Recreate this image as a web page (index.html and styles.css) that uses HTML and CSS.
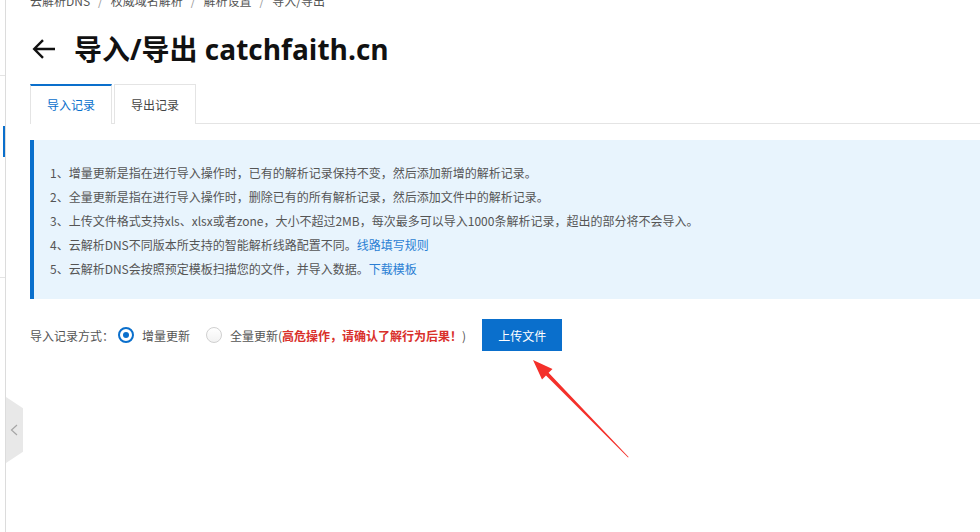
FILE: index.html
```html
<!DOCTYPE html>
<html lang="zh-CN">
<head>
<meta charset="utf-8">
<title>导入/导出 catchfaith.cn</title>
<link rel="stylesheet" href="styles.css">
</head>
<body>
<div class="shell">
  <aside class="side">
    <div class="side-top"></div>
    <div class="side-active"></div>
    <div class="side-sep"></div>
    <div class="collapse">
      <svg width="17" height="66" viewBox="0 0 17 66"><polyline points="11,28 5.5,33 11,38" fill="none" stroke="#a6a6a6" stroke-width="1.2"/></svg>
    </div>
  </aside>
  <main class="main">
    <nav class="crumb">
      <span>云解析DNS</span><span class="sep">/</span><span>权威域名解析</span><span class="sep">/</span><span>解析设置</span><span class="sep">/</span><span>导入/导出</span>
    </nav>
    <div class="head">
      <svg class="back" width="24" height="24" viewBox="0 0 24 24"><path d="M23 12H2.5M11 3.2L2.2 12 11 20.8" fill="none" stroke="#111" stroke-width="2.4"/></svg>
      <h1>导入/导出 catchfaith.cn</h1>
    </div>
    <div class="tabs">
      <div class="tab active">导入记录</div>
      <div class="tab">导出记录</div>
    </div>
    <div class="notice">
      <p>1、增量更新是指在进行导入操作时，已有的解析记录保持不变，然后添加新增的解析记录。</p>
      <p>2、全量更新是指在进行导入操作时，删除已有的所有解析记录，然后添加文件中的解析记录。</p>
      <p>3、上传文件格式支持xls、xlsx或者zone，大小不超过2MB，每次最多可以导入1000条解析记录，超出的部分将不会导入。</p>
      <p>4、云解析DNS不同版本所支持的智能解析线路配置不同。<a class="link">线路填写规则</a></p>
      <p>5、云解析DNS会按照预定模板扫描您的文件，并导入数据。<a class="link">下载模板</a></p>
    </div>
    <div class="form-row">
      <span class="label">导入记录方式：</span>
      <span class="radio checked"></span>
      <span class="opt">增量更新</span>
      <span class="radio"></span>
      <span class="opt">全量更新(<b class="warn">高危操作，请确认了解行为后果！</b>)</span>
      <button class="btn">上传文件</button>
    </div>
  </main>
  <svg class="annot" width="980" height="532" viewBox="0 0 980 532">
    <polygon points="533,360 552.5,369 548.6,372.8 628.6,457 628,457.4 546,375.4 542,379.5" fill="#f4302a"/>
  </svg>
</div>
</body>
</html>
```

FILE: styles.css
```css
html, body {
  margin: 0;
  padding: 0;
  background: #fff;
}
body {
  font-family: "Noto Sans CJK SC", sans-serif;
  font-size: 12px;
  color: #555;
  overflow: hidden;
}
.shell {
  position: relative;
  display: flex;
  width: 980px;
  height: 532px;
  overflow: hidden;
}
.side {
  position: relative;
  width: 5px;
  flex: none;
  border-right: 1px solid #dcdcdc;
}
.side-top {
  height: 75px;
  border-bottom: 1px solid #e4e4e4;
}
.side-active {
  margin-top: 50px;
  margin-left: 3px;
  width: 2px;
  height: 31px;
  background: #0a6fcc;
}
.side-sep {
  margin-top: 120px;
  border-top: 1px solid #e4e4e4;
}
.collapse {
  position: absolute;
  left: 6px;
  top: 397px;
  width: 17px;
  height: 66px;
  background: #e8e8e8;
  clip-path: polygon(0 0, 100% 17%, 100% 83%, 0 100%);
}
.collapse svg {
  display: block;
}
.main {
  flex: 1;
  min-width: 0;
  padding-left: 24px;
}
.crumb {
  margin-top: -9px;
  line-height: 20px;
  height: 20px;
  color: #555;
  white-space: nowrap;
}
.crumb .sep {
  padding: 0 8px;
  color: #999;
}
.head {
  display: flex;
  align-items: center;
  margin-top: 20px;
  height: 36px;
}
.back {
  flex: none;
  margin-left: 2px;
  margin-right: 18px;
}
.head h1 {
  margin: 0;
  font-family: "Open Sans", "Noto Sans CJK SC", sans-serif;
  font-size: 28px;
  font-weight: 700;
  line-height: 36px;
  color: #111;
  white-space: nowrap;
}
.tabs {
  display: flex;
  gap: 2px;
  margin-top: 17px;
  border-bottom: 1px solid #e4e4e4;
}
.tab {
  box-sizing: border-box;
  width: 82px;
  height: 40px;
  margin-bottom: -1px;
  border: 1px solid #e4e4e4;
  border-bottom: none;
  text-align: center;
  line-height: 39px;
  color: #444;
  background: #fff;
}
.tab.active {
  border-top: 2px solid #0a6fcc;
  line-height: 37px;
  color: #0a6fcc;
}
.notice {
  margin-top: 16px;
  padding: 21px 16px 18px;
  background: #e8f4fd;
  border-left: 4px solid #0a6fcc;
  line-height: 24px;
  color: #555;
  white-space: nowrap;
}
.notice p {
  margin: 0;
}
.link {
  color: #2a7fd4;
  text-decoration: none;
}
.form-row {
  display: flex;
  align-items: center;
  margin-top: 20px;
  height: 32px;
  white-space: nowrap;
}
.label {
  color: #555;
}
.radio {
  box-sizing: border-box;
  flex: none;
  width: 16px;
  height: 16px;
  margin-left: 4px;
  margin-right: 8px;
  border: 1px solid #d0d0d0;
  border-radius: 50%;
  background: linear-gradient(#fff, #f2f2f2);
}
.radio.checked {
  position: relative;
  border: 2px solid #0a6fcc;
  background: #fff;
}
.radio.checked::after {
  content: "";
  position: absolute;
  left: 3px;
  top: 3px;
  width: 6px;
  height: 6px;
  border-radius: 50%;
  background: #0a6fcc;
}
.opt {
  color: #555;
  margin-right: 12px;
}
.opt + .radio {
  margin-left: 4px;
}
.warn {
  color: #d9302b;
  font-weight: 700;
}
.btn {
  margin-left: 4px;
  width: 80px;
  height: 32px;
  border: none;
  padding: 0;
  background: #0a6fcc;
  color: #fff;
  font-family: "Noto Sans CJK SC", sans-serif;
  font-size: 12px;
}
.annot {
  position: absolute;
  left: 0;
  top: 0;
  pointer-events: none;
}
```
